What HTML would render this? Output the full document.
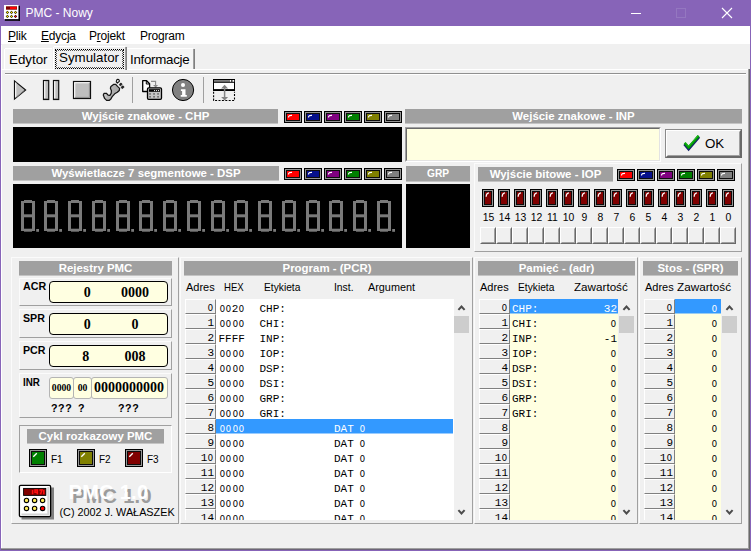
<!DOCTYPE html>
<html><head><meta charset="utf-8"><title>PMC - Nowy</title><style>
*{box-sizing:border-box;margin:0;padding:0}
html,body{width:751px;height:551px;overflow:hidden;background:#f0f0f0;font-family:"Liberation Sans",sans-serif;}
body{position:relative}
.abs,.abs *{position:absolute}
div,span,svg{position:absolute}
.t{white-space:nowrap;line-height:1}
.hdr{box-shadow:0 1px 0 #c4c4c4;background:#a0a0a0;color:#fff;font-weight:bold;font-size:11.45px;text-align:center;white-space:nowrap;overflow:hidden}
.hdr span{position:static}
.lbl{font-size:11px;color:#000;white-space:nowrap;line-height:12px;transform-origin:0 0}
.mono{font-family:"Liberation Mono",monospace;font-size:11px;white-space:nowrap;line-height:15px;color:#000;margin-top:2px}
.cell{background:#f0f0f0;border-top:1px solid #fff;border-left:1px solid #fff;border-bottom:1px solid #808080;border-right:1px solid #808080;font-family:"Liberation Mono",monospace;font-size:11px;text-align:right;line-height:16px;padding-right:1px;color:#000;overflow:hidden}
.frame{border:1px solid;border-color:#a0a0a0 #fff #fff #a0a0a0;}
.frame2{border:1px solid;border-color:#fbfbfb #a0a0a0 #a0a0a0 #fbfbfb;}
.ybox{background:#ffffe1;border:1px solid #000;border-radius:4px}
.gbox{background:#ffffe1;border:1px solid #b4b4b4;border-radius:3px}
.tb{font-family:"Liberation Serif",serif;font-weight:bold;color:#000;white-space:nowrap;line-height:1}
.bold{font-weight:bold}
i{display:inline-block;transform:scaleX(.8);font-style:normal}
</style></head><body>
<div style="left:0;top:0;width:751px;height:26px;background:#8764b8"></div>
<div style="left:0;top:26px;width:1px;height:525px;background:#8764b8"></div>
<div style="left:1px;top:45px;width:1px;height:503px;background:#fff"></div>
<div style="left:750px;top:26px;width:1px;height:525px;background:#8764b8"></div>
<div style="left:748px;top:69px;width:1px;height:480px;background:#a0a0a0"></div>
<div style="left:749px;top:69px;width:1px;height:481px;background:#696969"></div>
<div style="left:1px;top:548px;width:748px;height:1px;background:#a0a0a0"></div>
<div style="left:1px;top:549px;width:749px;height:1px;background:#6c6478"></div>
<div style="left:0;top:550px;width:751px;height:1px;background:#8764b8"></div>
<svg style="left:4px;top:5px" width="17" height="17" viewBox="0 0 17 17">
<rect x="0" y="0" width="14.6" height="14.2" fill="#fff"/>
<rect x="14.6" y="0.8" width="1.4" height="15" fill="#000"/><rect x="0.8" y="14.2" width="15.2" height="1.6" fill="#000"/>
<rect x="2" y="1.3" width="11" height="3.4" fill="#800000"/>
<rect x="6" y="2" width="6.6" height="2" fill="#f00"/>
<path d="M3.4 5.7 L5.1 7.4 L3.4 9.1 L1.7 7.4Z" fill="#000"/><rect x="2.65" y="6.65" width="1.5" height="1.5" fill="#ffe400"/><path d="M7.5 5.7 L9.2 7.4 L7.5 9.1 L5.8 7.4Z" fill="#000"/><rect x="6.75" y="6.65" width="1.5" height="1.5" fill="#ffe400"/><path d="M11.5 5.7 L13.2 7.4 L11.5 9.1 L9.8 7.4Z" fill="#000"/><rect x="10.75" y="6.65" width="1.5" height="1.5" fill="#ffe400"/><path d="M3.4 9.700000000000001 L5.1 11.4 L3.4 13.1 L1.7 11.4Z" fill="#000"/><rect x="2.65" y="10.65" width="1.5" height="1.5" fill="#ffe400"/><path d="M7.5 9.700000000000001 L9.2 11.4 L7.5 13.1 L5.8 11.4Z" fill="#000"/><rect x="6.75" y="10.65" width="1.5" height="1.5" fill="#ffe400"/><path d="M11.5 9.700000000000001 L13.2 11.4 L11.5 13.1 L9.8 11.4Z" fill="#000"/><rect x="10.75" y="10.65" width="1.5" height="1.5" fill="#ff0000"/>
</svg>
<div class="t" style="left:25.5px;top:7px;font-size:12px;color:#fff">PMC - Nowy</div>
<svg style="left:600px;top:0" width="151" height="26" viewBox="0 0 151 26">
<rect x="31" y="13" width="10" height="1" fill="#fff"/>
<rect x="76.5" y="8.5" width="9" height="9" fill="none" stroke="#a18ac8" stroke-width="1" stroke-dasharray="1 1"/>
<path d="M122 8 L132 18 M132 8 L122 18" stroke="#fff" stroke-width="1.1" fill="none"/>
</svg>
<div style="left:1px;top:26px;width:749px;height:18px;background:#fff"></div>
<div class="t" style="left:8px;top:30px;font-size:12px;color:#000;letter-spacing:-0.2px"><u>P</u>lik</div>
<div class="t" style="left:41px;top:30px;font-size:12px;color:#000;letter-spacing:-0.2px"><u>E</u>dycja</div>
<div class="t" style="left:89px;top:30px;font-size:12px;color:#000;letter-spacing:-0.2px">P<u>r</u>ojekt</div>
<div class="t" style="left:140px;top:30px;font-size:12px;color:#000;letter-spacing:-0.2px">Program</div>
<div style="left:5px;top:49px;width:47px;height:20px;background:#f5f5f5"></div>
<div style="left:127px;top:49px;width:66px;height:20px;background:#f5f5f5"></div>
<div class="t" style="left:9px;top:53px;font-size:13.33px">Edytor</div>
<div class="t" style="left:59px;top:51px;font-size:13.33px">Symulator</div>
<div class="t" style="left:130px;top:53px;font-size:13.33px;letter-spacing:-0.28px">Informacje</div>
<div style="left:1px;top:69px;width:747px;height:1px;background:#fff"></div>
<div style="left:54px;top:69px;width:71px;height:1px;background:#f0f0f0"></div>
<div style="left:5px;top:48px;width:47px;height:1px;background:#fff"></div>
<div style="left:4px;top:49px;width:1px;height:20px;background:#fff"></div>
<div style="left:53px;top:47px;width:1px;height:22px;background:#fff"></div>
<div style="left:54px;top:46px;width:71px;height:1px;background:#fff"></div>
<div style="left:125px;top:47px;width:1px;height:23px;background:#a0a0a0"></div>
<div style="left:126px;top:47px;width:1px;height:23px;background:#808080"></div>
<div style="left:55px;top:49px;width:69px;height:20px;border:1px dotted #000"></div>
<div style="left:56px;top:50px;width:67px;height:18px;border:1px dotted #555"></div>
<div style="left:127px;top:48px;width:66px;height:1px;background:#fff"></div>
<div style="left:193px;top:49px;width:1px;height:20px;background:#a0a0a0"></div>
<div style="left:194px;top:49px;width:1px;height:20px;background:#808080"></div>
<div style="left:5px;top:73px;width:741px;height:1px;background:#909090"></div>
<div style="left:5px;top:74px;width:741px;height:1px;background:#fff"></div>
<svg style="left:0;top:74px" width="250" height="32" viewBox="0 74 250 32">
<path d="M14.5 80.9 L14.5 99.1 L25.6 90 Z" fill="#bebebe" stroke="#101010" stroke-width="1.2" stroke-linejoin="miter"/>
<path d="M15.7 82.6 V97.3" stroke="#fff" stroke-width="1.1"/>
<path d="M16.5 97 L24 90.6" stroke="#8c8c8c" stroke-width="0.9"/>
<rect x="43.5" y="80.5" width="5.2" height="19" fill="#bebebe" stroke="#101010" stroke-width="1.2"/>
<rect x="44.2" y="81.2" width="1.1" height="17.6" fill="#fff"/><rect x="44.2" y="98" width="3.9" height="0.9" fill="#8c8c8c"/>
<rect x="53.5" y="80.5" width="5.2" height="19" fill="#bebebe" stroke="#101010" stroke-width="1.2"/>
<rect x="54.2" y="81.2" width="1.1" height="17.6" fill="#fff"/><rect x="54.2" y="98" width="3.9" height="0.9" fill="#8c8c8c"/>
<rect x="73.5" y="81.5" width="17" height="17" fill="#bebebe" stroke="#101010" stroke-width="1.2"/>
<path d="M74.7 97.5 V82.7 H89.5" stroke="#fff" stroke-width="1.1" fill="none"/>
<path d="M75 97.4 H89.4 V83" stroke="#8c8c8c" stroke-width="1" fill="none"/>
<!-- foot -->
<defs><linearGradient id="fg" x1="0" y1="0" x2="1" y2="0.3"><stop offset="0" stop-color="#e6e6e6"/><stop offset="0.45" stop-color="#b4b4b4"/><stop offset="1" stop-color="#a6a6a6"/></linearGradient></defs>
<path d="M113.5 84.4 L115.75 84.4 L117.5 86.4 L119.6 88.4 L119.3 90.5 L117.3 92.3 L114.7 93.8 L112.4 96.3 L110.9 98.9 L109.1 100.4 L106.6 100.4 L104.6 98.4 L103.3 95.1 L104.1 93.3 L106.35 93.3 L108.1 95.1 L109.9 95.3 L111.2 93.3 L111.4 90.7 L110.4 88.2 L110.9 86.4Z" fill="url(#fg)" stroke="#141414" stroke-width="1.25" stroke-linejoin="round"/>
<path d="M117.8 79.2 C119 79.4 119.6 80.6 119.3 81.4 L117.3 83.2 C116.4 82.4 116.2 80.6 116.6 79.9 Z" fill="#e0e0e0" stroke="#141414" stroke-width="1.1" stroke-linejoin="round"/>
<ellipse cx="120.7" cy="84.4" rx="1.35" ry="1.05" transform="rotate(-40 120.7 84.4)" fill="#282828" stroke="#101010" stroke-width="0.7"/>
<ellipse cx="122.6" cy="87.2" rx="1.4" ry="1.1" transform="rotate(-40 122.6 87.2)" fill="#282828" stroke="#101010" stroke-width="0.7"/>
<rect x="132" y="77" width="1" height="26" fill="#a0a0a0"/>
<!-- paste calc -->
<path d="M142.7 80.7 h3.9 l3 3 v7.8 h-6.9 z" fill="#fff" stroke="#000" stroke-width="1.3" stroke-linejoin="round"/>
<path d="M146.3 81 v3 h3" fill="none" stroke="#000" stroke-width="1"/>
<path d="M151 81.4 h4.6 v5.8" fill="none" stroke="#8c8c8c" stroke-width="1.1"/>
<path d="M153 85 h5.2 l-2.6 2.6z" fill="#8c8c8c"/>
<rect x="147.5" y="87.8" width="14" height="11.5" rx="1.2" fill="#c4c4c4" stroke="#000" stroke-width="1.3"/>
<rect x="149" y="89.2" width="11" height="2.6" fill="#000"/>
<g fill="#d8d8d8"><rect x="154" y="90" width="1.1" height="1.1"/><rect x="156" y="90" width="1.1" height="1.1"/><rect x="158" y="90" width="1.1" height="1.1"/></g>
<g fill="#6c6c6c"><rect x="149.2" y="93.1" width="1.7" height="1.6"/><rect x="153.2" y="93.1" width="1.7" height="1.6"/><rect x="157.2" y="93.1" width="1.7" height="1.6"/>
<rect x="149.2" y="96" width="1.7" height="1.6"/><rect x="153.2" y="96" width="1.7" height="1.6"/><rect x="157.2" y="96" width="1.7" height="1.6"/></g>
<!-- info -->
<circle cx="183.05" cy="90" r="10.6" fill="#808080" stroke="#000" stroke-width="1"/>
<circle cx="183" cy="85" r="2.05" fill="#fff"/>
<path d="M180.9 89.3 h4.6 v5.7 h1.3 v1.7 h-6.1 v-1.7 h1.4 v-4 h-1.2z" fill="#fff"/>
<rect x="203" y="77" width="1" height="26" fill="#a0a0a0"/>
<!-- window icon -->
<rect x="213.5" y="79.5" width="21" height="11" fill="#fff" stroke="#000"/>
<rect x="213" y="79" width="22" height="3.8" fill="#000"/>
<rect x="214" y="80" width="15" height="1.8" fill="#808080"/>
<rect x="229.5" y="80" width="1.8" height="1.8" fill="#fff"/><rect x="232.4" y="80" width="1.8" height="1.8" fill="#fff"/>
<rect x="213" y="89.1" width="22" height="1.8" fill="#000"/>
<path d="M213.6 91.8 v8.7 h20.9 v-8.7" fill="none" stroke="#000" stroke-width="1.1" stroke-dasharray="2 1.4"/>
<path d="M224.6 87 v11" stroke="#848484" stroke-width="1.5" fill="none"/>
<path d="M221.1 88.6 l3.5 -3.9 l3.5 3.9z M221.1 97 l3.5 3.6 l3.5 -3.6z" fill="#848484"/>
</svg>
<div class="hdr" style="left:13px;top:109px;width:265px;height:14px;line-height:14px"><span>Wyjście znakowe - CHP</span></div>
<svg style="left:284px;top:111px" width="18" height="12" viewBox="0 0 18 12"><rect x="0" y="0" width="18" height="12" fill="#000"/><rect x="1" y="1" width="16" height="10" fill="#969696"/><rect x="2" y="2" width="14" height="8" fill="#0c0c0c"/><rect x="3" y="3" width="12" height="6" fill="#ff0000"/><path d="M4.5 6.5 C4.5 4.8 5.5 4.2 8 4.3" stroke="#fff" stroke-width="1.2" fill="none"/></svg>
<svg style="left:304px;top:111px" width="18" height="12" viewBox="0 0 18 12"><rect x="0" y="0" width="18" height="12" fill="#000"/><rect x="1" y="1" width="16" height="10" fill="#969696"/><rect x="2" y="2" width="14" height="8" fill="#0c0c0c"/><rect x="3" y="3" width="12" height="6" fill="#06108c"/><path d="M4.5 6.5 C4.5 4.8 5.5 4.2 8 4.3" stroke="#fff" stroke-width="1.2" fill="none"/></svg>
<svg style="left:324px;top:111px" width="18" height="12" viewBox="0 0 18 12"><rect x="0" y="0" width="18" height="12" fill="#000"/><rect x="1" y="1" width="16" height="10" fill="#969696"/><rect x="2" y="2" width="14" height="8" fill="#0c0c0c"/><rect x="3" y="3" width="12" height="6" fill="#800080"/><path d="M4.5 6.5 C4.5 4.8 5.5 4.2 8 4.3" stroke="#fff" stroke-width="1.2" fill="none"/></svg>
<svg style="left:344px;top:111px" width="18" height="12" viewBox="0 0 18 12"><rect x="0" y="0" width="18" height="12" fill="#000"/><rect x="1" y="1" width="16" height="10" fill="#969696"/><rect x="2" y="2" width="14" height="8" fill="#0c0c0c"/><rect x="3" y="3" width="12" height="6" fill="#008000"/><path d="M4.5 6.5 C4.5 4.8 5.5 4.2 8 4.3" stroke="#fff" stroke-width="1.2" fill="none"/></svg>
<svg style="left:364px;top:111px" width="18" height="12" viewBox="0 0 18 12"><rect x="0" y="0" width="18" height="12" fill="#000"/><rect x="1" y="1" width="16" height="10" fill="#969696"/><rect x="2" y="2" width="14" height="8" fill="#0c0c0c"/><rect x="3" y="3" width="12" height="6" fill="#808000"/><path d="M4.5 6.5 C4.5 4.8 5.5 4.2 8 4.3" stroke="#fff" stroke-width="1.2" fill="none"/></svg>
<svg style="left:384px;top:111px" width="18" height="12" viewBox="0 0 18 12"><rect x="0" y="0" width="18" height="12" fill="#000"/><rect x="1" y="1" width="16" height="10" fill="#969696"/><rect x="2" y="2" width="14" height="8" fill="#0c0c0c"/><rect x="3" y="3" width="12" height="6" fill="#808080"/><path d="M4.5 6.5 C4.5 4.8 5.5 4.2 8 4.3" stroke="#fff" stroke-width="1.2" fill="none"/></svg>
<div style="left:13px;top:127px;width:389px;height:35px;background:#000"></div>
<div class="hdr" style="left:405px;top:109px;width:337px;height:14px;line-height:14px"><span>Wejście znakowe - INP</span></div>
<div style="left:405px;top:127px;width:256px;height:35px;background:#ffffe1;border:1px solid;border-color:#a0a0a0 #fff #fff #a0a0a0"></div>
<div style="left:406px;top:128px;width:254px;height:33px;border:1px solid;border-color:#696969 #e3e3e3 #e3e3e3 #696969"></div>
<div style="left:665px;top:129px;width:77px;height:29px;background:#f0f0f0;border:1px solid;border-color:#8a8a8a #696969 #696969 #8a8a8a"></div>
<div style="left:666px;top:130px;width:75px;height:27px;border:1px solid;border-color:#fff #696969 #696969 #fff"></div>
<div style="left:667px;top:131px;width:73px;height:25px;border:1px solid;border-color:#f0f0f0 #a0a0a0 #a0a0a0 #f0f0f0"></div>
<svg style="left:682px;top:133px" width="20" height="20" viewBox="0 0 20 20">
<path d="M2.6 10.9 L6.6 15.6 L16.9 3.6" stroke="#14226a" stroke-width="3.3" fill="none" stroke-linejoin="miter"/>
<path d="M2.7 9.9 L6.6 14.3 L16.6 2.9" stroke="#00a000" stroke-width="2.5" fill="none" stroke-linejoin="miter"/>
<path d="M3.2 9.3 L6.6 13.2 L16.2 2.4" stroke="#30c030" stroke-width="0.9" fill="none" stroke-linejoin="miter"/>
</svg>
<div class="t" style="left:705px;top:137px;font-size:13.33px">OK</div>
<div class="hdr" style="left:13px;top:166px;width:266px;height:14px;line-height:14px"><span>Wyświetlacze 7 segmentowe - DSP</span></div>
<svg style="left:284px;top:168px" width="18" height="12" viewBox="0 0 18 12"><rect x="0" y="0" width="18" height="12" fill="#000"/><rect x="1" y="1" width="16" height="10" fill="#969696"/><rect x="2" y="2" width="14" height="8" fill="#0c0c0c"/><rect x="3" y="3" width="12" height="6" fill="#ff0000"/><path d="M4.5 6.5 C4.5 4.8 5.5 4.2 8 4.3" stroke="#fff" stroke-width="1.2" fill="none"/></svg>
<svg style="left:304px;top:168px" width="18" height="12" viewBox="0 0 18 12"><rect x="0" y="0" width="18" height="12" fill="#000"/><rect x="1" y="1" width="16" height="10" fill="#969696"/><rect x="2" y="2" width="14" height="8" fill="#0c0c0c"/><rect x="3" y="3" width="12" height="6" fill="#06108c"/><path d="M4.5 6.5 C4.5 4.8 5.5 4.2 8 4.3" stroke="#fff" stroke-width="1.2" fill="none"/></svg>
<svg style="left:324px;top:168px" width="18" height="12" viewBox="0 0 18 12"><rect x="0" y="0" width="18" height="12" fill="#000"/><rect x="1" y="1" width="16" height="10" fill="#969696"/><rect x="2" y="2" width="14" height="8" fill="#0c0c0c"/><rect x="3" y="3" width="12" height="6" fill="#800080"/><path d="M4.5 6.5 C4.5 4.8 5.5 4.2 8 4.3" stroke="#fff" stroke-width="1.2" fill="none"/></svg>
<svg style="left:344px;top:168px" width="18" height="12" viewBox="0 0 18 12"><rect x="0" y="0" width="18" height="12" fill="#000"/><rect x="1" y="1" width="16" height="10" fill="#969696"/><rect x="2" y="2" width="14" height="8" fill="#0c0c0c"/><rect x="3" y="3" width="12" height="6" fill="#008000"/><path d="M4.5 6.5 C4.5 4.8 5.5 4.2 8 4.3" stroke="#fff" stroke-width="1.2" fill="none"/></svg>
<svg style="left:364px;top:168px" width="18" height="12" viewBox="0 0 18 12"><rect x="0" y="0" width="18" height="12" fill="#000"/><rect x="1" y="1" width="16" height="10" fill="#969696"/><rect x="2" y="2" width="14" height="8" fill="#0c0c0c"/><rect x="3" y="3" width="12" height="6" fill="#808000"/><path d="M4.5 6.5 C4.5 4.8 5.5 4.2 8 4.3" stroke="#fff" stroke-width="1.2" fill="none"/></svg>
<svg style="left:384px;top:168px" width="18" height="12" viewBox="0 0 18 12"><rect x="0" y="0" width="18" height="12" fill="#000"/><rect x="1" y="1" width="16" height="10" fill="#969696"/><rect x="2" y="2" width="14" height="8" fill="#0c0c0c"/><rect x="3" y="3" width="12" height="6" fill="#808080"/><path d="M4.5 6.5 C4.5 4.8 5.5 4.2 8 4.3" stroke="#fff" stroke-width="1.2" fill="none"/></svg>
<div style="left:13px;top:184px;width:389px;height:64px;background:#000"></div>
<svg style="left:0;top:0" width="410" height="250" viewBox="0 0 410 250"><g fill="#7a7a7a"><g transform="translate(21.00,200)"><rect x="0" y="1" width="3" height="30" /><rect x="11" y="1" width="3" height="30"/><rect x="3" y="0" width="8" height="3"/><rect x="3" y="14.3" width="8" height="3"/><rect x="3" y="28.7" width="8" height="3"/><rect x="15.2" y="29" width="2.8" height="2.8"/></g><g transform="translate(44.00,200)"><rect x="0" y="1" width="3" height="30" /><rect x="11" y="1" width="3" height="30"/><rect x="3" y="0" width="8" height="3"/><rect x="3" y="14.3" width="8" height="3"/><rect x="3" y="28.7" width="8" height="3"/><rect x="15.2" y="29" width="2.8" height="2.8"/></g><g transform="translate(68.00,200)"><rect x="0" y="1" width="3" height="30" /><rect x="11" y="1" width="3" height="30"/><rect x="3" y="0" width="8" height="3"/><rect x="3" y="14.3" width="8" height="3"/><rect x="3" y="28.7" width="8" height="3"/><rect x="15.2" y="29" width="2.8" height="2.8"/></g><g transform="translate(92.00,200)"><rect x="0" y="1" width="3" height="30" /><rect x="11" y="1" width="3" height="30"/><rect x="3" y="0" width="8" height="3"/><rect x="3" y="14.3" width="8" height="3"/><rect x="3" y="28.7" width="8" height="3"/><rect x="15.2" y="29" width="2.8" height="2.8"/></g><g transform="translate(116.00,200)"><rect x="0" y="1" width="3" height="30" /><rect x="11" y="1" width="3" height="30"/><rect x="3" y="0" width="8" height="3"/><rect x="3" y="14.3" width="8" height="3"/><rect x="3" y="28.7" width="8" height="3"/><rect x="15.2" y="29" width="2.8" height="2.8"/></g><g transform="translate(139.00,200)"><rect x="0" y="1" width="3" height="30" /><rect x="11" y="1" width="3" height="30"/><rect x="3" y="0" width="8" height="3"/><rect x="3" y="14.3" width="8" height="3"/><rect x="3" y="28.7" width="8" height="3"/><rect x="15.2" y="29" width="2.8" height="2.8"/></g><g transform="translate(163.00,200)"><rect x="0" y="1" width="3" height="30" /><rect x="11" y="1" width="3" height="30"/><rect x="3" y="0" width="8" height="3"/><rect x="3" y="14.3" width="8" height="3"/><rect x="3" y="28.7" width="8" height="3"/><rect x="15.2" y="29" width="2.8" height="2.8"/></g><g transform="translate(187.00,200)"><rect x="0" y="1" width="3" height="30" /><rect x="11" y="1" width="3" height="30"/><rect x="3" y="0" width="8" height="3"/><rect x="3" y="14.3" width="8" height="3"/><rect x="3" y="28.7" width="8" height="3"/><rect x="15.2" y="29" width="2.8" height="2.8"/></g><g transform="translate(211.00,200)"><rect x="0" y="1" width="3" height="30" /><rect x="11" y="1" width="3" height="30"/><rect x="3" y="0" width="8" height="3"/><rect x="3" y="14.3" width="8" height="3"/><rect x="3" y="28.7" width="8" height="3"/><rect x="15.2" y="29" width="2.8" height="2.8"/></g><g transform="translate(234.00,200)"><rect x="0" y="1" width="3" height="30" /><rect x="11" y="1" width="3" height="30"/><rect x="3" y="0" width="8" height="3"/><rect x="3" y="14.3" width="8" height="3"/><rect x="3" y="28.7" width="8" height="3"/><rect x="15.2" y="29" width="2.8" height="2.8"/></g><g transform="translate(258.00,200)"><rect x="0" y="1" width="3" height="30" /><rect x="11" y="1" width="3" height="30"/><rect x="3" y="0" width="8" height="3"/><rect x="3" y="14.3" width="8" height="3"/><rect x="3" y="28.7" width="8" height="3"/><rect x="15.2" y="29" width="2.8" height="2.8"/></g><g transform="translate(282.00,200)"><rect x="0" y="1" width="3" height="30" /><rect x="11" y="1" width="3" height="30"/><rect x="3" y="0" width="8" height="3"/><rect x="3" y="14.3" width="8" height="3"/><rect x="3" y="28.7" width="8" height="3"/><rect x="15.2" y="29" width="2.8" height="2.8"/></g><g transform="translate(306.00,200)"><rect x="0" y="1" width="3" height="30" /><rect x="11" y="1" width="3" height="30"/><rect x="3" y="0" width="8" height="3"/><rect x="3" y="14.3" width="8" height="3"/><rect x="3" y="28.7" width="8" height="3"/><rect x="15.2" y="29" width="2.8" height="2.8"/></g><g transform="translate(329.00,200)"><rect x="0" y="1" width="3" height="30" /><rect x="11" y="1" width="3" height="30"/><rect x="3" y="0" width="8" height="3"/><rect x="3" y="14.3" width="8" height="3"/><rect x="3" y="28.7" width="8" height="3"/><rect x="15.2" y="29" width="2.8" height="2.8"/></g><g transform="translate(353.00,200)"><rect x="0" y="1" width="3" height="30" /><rect x="11" y="1" width="3" height="30"/><rect x="3" y="0" width="8" height="3"/><rect x="3" y="14.3" width="8" height="3"/><rect x="3" y="28.7" width="8" height="3"/><rect x="15.2" y="29" width="2.8" height="2.8"/></g><g transform="translate(377.00,200)"><rect x="0" y="1" width="3" height="30" /><rect x="11" y="1" width="3" height="30"/><rect x="3" y="0" width="8" height="3"/><rect x="3" y="14.3" width="8" height="3"/><rect x="3" y="28.7" width="8" height="3"/><rect x="15.2" y="29" width="2.8" height="2.8"/></g></g></svg>
<div class="hdr" style="left:406px;top:166px;width:64px;height:15px;line-height:15px;font-size:10.2px"><span>GRP</span></div>
<div style="left:406px;top:184px;width:64px;height:64px;background:#000"></div>
<div class="frame2" style="left:474px;top:163px;width:268px;height:89px"></div>
<div class="hdr" style="left:478px;top:167px;width:135px;height:14px;line-height:14px"><span>Wyjście bitowe - IOP</span></div>
<svg style="left:617px;top:169px" width="18" height="12" viewBox="0 0 18 12"><rect x="0" y="0" width="18" height="12" fill="#000"/><rect x="1" y="1" width="16" height="10" fill="#969696"/><rect x="2" y="2" width="14" height="8" fill="#0c0c0c"/><rect x="3" y="3" width="12" height="6" fill="#ff0000"/><path d="M4.5 6.5 C4.5 4.8 5.5 4.2 8 4.3" stroke="#fff" stroke-width="1.2" fill="none"/></svg>
<svg style="left:637px;top:169px" width="18" height="12" viewBox="0 0 18 12"><rect x="0" y="0" width="18" height="12" fill="#000"/><rect x="1" y="1" width="16" height="10" fill="#969696"/><rect x="2" y="2" width="14" height="8" fill="#0c0c0c"/><rect x="3" y="3" width="12" height="6" fill="#06108c"/><path d="M4.5 6.5 C4.5 4.8 5.5 4.2 8 4.3" stroke="#fff" stroke-width="1.2" fill="none"/></svg>
<svg style="left:657px;top:169px" width="18" height="12" viewBox="0 0 18 12"><rect x="0" y="0" width="18" height="12" fill="#000"/><rect x="1" y="1" width="16" height="10" fill="#969696"/><rect x="2" y="2" width="14" height="8" fill="#0c0c0c"/><rect x="3" y="3" width="12" height="6" fill="#800080"/><path d="M4.5 6.5 C4.5 4.8 5.5 4.2 8 4.3" stroke="#fff" stroke-width="1.2" fill="none"/></svg>
<svg style="left:677px;top:169px" width="18" height="12" viewBox="0 0 18 12"><rect x="0" y="0" width="18" height="12" fill="#000"/><rect x="1" y="1" width="16" height="10" fill="#969696"/><rect x="2" y="2" width="14" height="8" fill="#0c0c0c"/><rect x="3" y="3" width="12" height="6" fill="#008000"/><path d="M4.5 6.5 C4.5 4.8 5.5 4.2 8 4.3" stroke="#fff" stroke-width="1.2" fill="none"/></svg>
<svg style="left:697px;top:169px" width="18" height="12" viewBox="0 0 18 12"><rect x="0" y="0" width="18" height="12" fill="#000"/><rect x="1" y="1" width="16" height="10" fill="#969696"/><rect x="2" y="2" width="14" height="8" fill="#0c0c0c"/><rect x="3" y="3" width="12" height="6" fill="#808000"/><path d="M4.5 6.5 C4.5 4.8 5.5 4.2 8 4.3" stroke="#fff" stroke-width="1.2" fill="none"/></svg>
<svg style="left:717px;top:169px" width="18" height="12" viewBox="0 0 18 12"><rect x="0" y="0" width="18" height="12" fill="#000"/><rect x="1" y="1" width="16" height="10" fill="#969696"/><rect x="2" y="2" width="14" height="8" fill="#0c0c0c"/><rect x="3" y="3" width="12" height="6" fill="#808080"/><path d="M4.5 6.5 C4.5 4.8 5.5 4.2 8 4.3" stroke="#fff" stroke-width="1.2" fill="none"/></svg>
<svg style="left:482px;top:189px" width="12" height="18" viewBox="0 0 12 18"><rect x="0" y="0" width="12" height="18" fill="#000"/><rect x="1" y="1" width="10" height="16" fill="#969696"/><rect x="2" y="2" width="8" height="14" fill="#0c0c0c"/><rect x="3" y="3" width="6" height="12" fill="#800000"/><path d="M4.2 7.8 C4.2 5.4 4.8 4.2 7 3.9" stroke="#fff" stroke-width="1.2" fill="none"/></svg>
<div class="lbl" style="left:476.5px;top:212px;width:24px;text-align:center;font-size:10.4px">15</div>
<div style="left:480px;top:227px;width:16px;height:17px;background:#f0f0f0;border:1px solid;border-color:#fff #696969 #696969 #fff"></div>
<div style="left:481px;top:228px;width:14px;height:15px;border:1px solid;border-color:#f0f0f0 #a0a0a0 #a0a0a0 #f0f0f0"></div>
<svg style="left:498px;top:189px" width="12" height="18" viewBox="0 0 12 18"><rect x="0" y="0" width="12" height="18" fill="#000"/><rect x="1" y="1" width="10" height="16" fill="#969696"/><rect x="2" y="2" width="8" height="14" fill="#0c0c0c"/><rect x="3" y="3" width="6" height="12" fill="#800000"/><path d="M4.2 7.8 C4.2 5.4 4.8 4.2 7 3.9" stroke="#fff" stroke-width="1.2" fill="none"/></svg>
<div class="lbl" style="left:492.5px;top:212px;width:24px;text-align:center;font-size:10.4px">14</div>
<div style="left:496px;top:227px;width:16px;height:17px;background:#f0f0f0;border:1px solid;border-color:#fff #696969 #696969 #fff"></div>
<div style="left:497px;top:228px;width:14px;height:15px;border:1px solid;border-color:#f0f0f0 #a0a0a0 #a0a0a0 #f0f0f0"></div>
<svg style="left:514px;top:189px" width="12" height="18" viewBox="0 0 12 18"><rect x="0" y="0" width="12" height="18" fill="#000"/><rect x="1" y="1" width="10" height="16" fill="#969696"/><rect x="2" y="2" width="8" height="14" fill="#0c0c0c"/><rect x="3" y="3" width="6" height="12" fill="#800000"/><path d="M4.2 7.8 C4.2 5.4 4.8 4.2 7 3.9" stroke="#fff" stroke-width="1.2" fill="none"/></svg>
<div class="lbl" style="left:508.5px;top:212px;width:24px;text-align:center;font-size:10.4px">13</div>
<div style="left:512px;top:227px;width:16px;height:17px;background:#f0f0f0;border:1px solid;border-color:#fff #696969 #696969 #fff"></div>
<div style="left:513px;top:228px;width:14px;height:15px;border:1px solid;border-color:#f0f0f0 #a0a0a0 #a0a0a0 #f0f0f0"></div>
<svg style="left:530px;top:189px" width="12" height="18" viewBox="0 0 12 18"><rect x="0" y="0" width="12" height="18" fill="#000"/><rect x="1" y="1" width="10" height="16" fill="#969696"/><rect x="2" y="2" width="8" height="14" fill="#0c0c0c"/><rect x="3" y="3" width="6" height="12" fill="#800000"/><path d="M4.2 7.8 C4.2 5.4 4.8 4.2 7 3.9" stroke="#fff" stroke-width="1.2" fill="none"/></svg>
<div class="lbl" style="left:524.5px;top:212px;width:24px;text-align:center;font-size:10.4px">12</div>
<div style="left:528px;top:227px;width:16px;height:17px;background:#f0f0f0;border:1px solid;border-color:#fff #696969 #696969 #fff"></div>
<div style="left:529px;top:228px;width:14px;height:15px;border:1px solid;border-color:#f0f0f0 #a0a0a0 #a0a0a0 #f0f0f0"></div>
<svg style="left:546px;top:189px" width="12" height="18" viewBox="0 0 12 18"><rect x="0" y="0" width="12" height="18" fill="#000"/><rect x="1" y="1" width="10" height="16" fill="#969696"/><rect x="2" y="2" width="8" height="14" fill="#0c0c0c"/><rect x="3" y="3" width="6" height="12" fill="#800000"/><path d="M4.2 7.8 C4.2 5.4 4.8 4.2 7 3.9" stroke="#fff" stroke-width="1.2" fill="none"/></svg>
<div class="lbl" style="left:540.5px;top:212px;width:24px;text-align:center;font-size:10.4px">11</div>
<div style="left:544px;top:227px;width:16px;height:17px;background:#f0f0f0;border:1px solid;border-color:#fff #696969 #696969 #fff"></div>
<div style="left:545px;top:228px;width:14px;height:15px;border:1px solid;border-color:#f0f0f0 #a0a0a0 #a0a0a0 #f0f0f0"></div>
<svg style="left:562px;top:189px" width="12" height="18" viewBox="0 0 12 18"><rect x="0" y="0" width="12" height="18" fill="#000"/><rect x="1" y="1" width="10" height="16" fill="#969696"/><rect x="2" y="2" width="8" height="14" fill="#0c0c0c"/><rect x="3" y="3" width="6" height="12" fill="#800000"/><path d="M4.2 7.8 C4.2 5.4 4.8 4.2 7 3.9" stroke="#fff" stroke-width="1.2" fill="none"/></svg>
<div class="lbl" style="left:556.5px;top:212px;width:24px;text-align:center;font-size:10.4px">10</div>
<div style="left:560px;top:227px;width:16px;height:17px;background:#f0f0f0;border:1px solid;border-color:#fff #696969 #696969 #fff"></div>
<div style="left:561px;top:228px;width:14px;height:15px;border:1px solid;border-color:#f0f0f0 #a0a0a0 #a0a0a0 #f0f0f0"></div>
<svg style="left:578px;top:189px" width="12" height="18" viewBox="0 0 12 18"><rect x="0" y="0" width="12" height="18" fill="#000"/><rect x="1" y="1" width="10" height="16" fill="#969696"/><rect x="2" y="2" width="8" height="14" fill="#0c0c0c"/><rect x="3" y="3" width="6" height="12" fill="#800000"/><path d="M4.2 7.8 C4.2 5.4 4.8 4.2 7 3.9" stroke="#fff" stroke-width="1.2" fill="none"/></svg>
<div class="lbl" style="left:572.5px;top:212px;width:24px;text-align:center;font-size:10.4px">9</div>
<div style="left:576px;top:227px;width:16px;height:17px;background:#f0f0f0;border:1px solid;border-color:#fff #696969 #696969 #fff"></div>
<div style="left:577px;top:228px;width:14px;height:15px;border:1px solid;border-color:#f0f0f0 #a0a0a0 #a0a0a0 #f0f0f0"></div>
<svg style="left:594px;top:189px" width="12" height="18" viewBox="0 0 12 18"><rect x="0" y="0" width="12" height="18" fill="#000"/><rect x="1" y="1" width="10" height="16" fill="#969696"/><rect x="2" y="2" width="8" height="14" fill="#0c0c0c"/><rect x="3" y="3" width="6" height="12" fill="#800000"/><path d="M4.2 7.8 C4.2 5.4 4.8 4.2 7 3.9" stroke="#fff" stroke-width="1.2" fill="none"/></svg>
<div class="lbl" style="left:588.5px;top:212px;width:24px;text-align:center;font-size:10.4px">8</div>
<div style="left:592px;top:227px;width:16px;height:17px;background:#f0f0f0;border:1px solid;border-color:#fff #696969 #696969 #fff"></div>
<div style="left:593px;top:228px;width:14px;height:15px;border:1px solid;border-color:#f0f0f0 #a0a0a0 #a0a0a0 #f0f0f0"></div>
<svg style="left:610px;top:189px" width="12" height="18" viewBox="0 0 12 18"><rect x="0" y="0" width="12" height="18" fill="#000"/><rect x="1" y="1" width="10" height="16" fill="#969696"/><rect x="2" y="2" width="8" height="14" fill="#0c0c0c"/><rect x="3" y="3" width="6" height="12" fill="#800000"/><path d="M4.2 7.8 C4.2 5.4 4.8 4.2 7 3.9" stroke="#fff" stroke-width="1.2" fill="none"/></svg>
<div class="lbl" style="left:604.5px;top:212px;width:24px;text-align:center;font-size:10.4px">7</div>
<div style="left:608px;top:227px;width:16px;height:17px;background:#f0f0f0;border:1px solid;border-color:#fff #696969 #696969 #fff"></div>
<div style="left:609px;top:228px;width:14px;height:15px;border:1px solid;border-color:#f0f0f0 #a0a0a0 #a0a0a0 #f0f0f0"></div>
<svg style="left:626px;top:189px" width="12" height="18" viewBox="0 0 12 18"><rect x="0" y="0" width="12" height="18" fill="#000"/><rect x="1" y="1" width="10" height="16" fill="#969696"/><rect x="2" y="2" width="8" height="14" fill="#0c0c0c"/><rect x="3" y="3" width="6" height="12" fill="#800000"/><path d="M4.2 7.8 C4.2 5.4 4.8 4.2 7 3.9" stroke="#fff" stroke-width="1.2" fill="none"/></svg>
<div class="lbl" style="left:620.5px;top:212px;width:24px;text-align:center;font-size:10.4px">6</div>
<div style="left:624px;top:227px;width:16px;height:17px;background:#f0f0f0;border:1px solid;border-color:#fff #696969 #696969 #fff"></div>
<div style="left:625px;top:228px;width:14px;height:15px;border:1px solid;border-color:#f0f0f0 #a0a0a0 #a0a0a0 #f0f0f0"></div>
<svg style="left:642px;top:189px" width="12" height="18" viewBox="0 0 12 18"><rect x="0" y="0" width="12" height="18" fill="#000"/><rect x="1" y="1" width="10" height="16" fill="#969696"/><rect x="2" y="2" width="8" height="14" fill="#0c0c0c"/><rect x="3" y="3" width="6" height="12" fill="#800000"/><path d="M4.2 7.8 C4.2 5.4 4.8 4.2 7 3.9" stroke="#fff" stroke-width="1.2" fill="none"/></svg>
<div class="lbl" style="left:636.5px;top:212px;width:24px;text-align:center;font-size:10.4px">5</div>
<div style="left:640px;top:227px;width:16px;height:17px;background:#f0f0f0;border:1px solid;border-color:#fff #696969 #696969 #fff"></div>
<div style="left:641px;top:228px;width:14px;height:15px;border:1px solid;border-color:#f0f0f0 #a0a0a0 #a0a0a0 #f0f0f0"></div>
<svg style="left:658px;top:189px" width="12" height="18" viewBox="0 0 12 18"><rect x="0" y="0" width="12" height="18" fill="#000"/><rect x="1" y="1" width="10" height="16" fill="#969696"/><rect x="2" y="2" width="8" height="14" fill="#0c0c0c"/><rect x="3" y="3" width="6" height="12" fill="#800000"/><path d="M4.2 7.8 C4.2 5.4 4.8 4.2 7 3.9" stroke="#fff" stroke-width="1.2" fill="none"/></svg>
<div class="lbl" style="left:652.5px;top:212px;width:24px;text-align:center;font-size:10.4px">4</div>
<div style="left:656px;top:227px;width:16px;height:17px;background:#f0f0f0;border:1px solid;border-color:#fff #696969 #696969 #fff"></div>
<div style="left:657px;top:228px;width:14px;height:15px;border:1px solid;border-color:#f0f0f0 #a0a0a0 #a0a0a0 #f0f0f0"></div>
<svg style="left:674px;top:189px" width="12" height="18" viewBox="0 0 12 18"><rect x="0" y="0" width="12" height="18" fill="#000"/><rect x="1" y="1" width="10" height="16" fill="#969696"/><rect x="2" y="2" width="8" height="14" fill="#0c0c0c"/><rect x="3" y="3" width="6" height="12" fill="#800000"/><path d="M4.2 7.8 C4.2 5.4 4.8 4.2 7 3.9" stroke="#fff" stroke-width="1.2" fill="none"/></svg>
<div class="lbl" style="left:668.5px;top:212px;width:24px;text-align:center;font-size:10.4px">3</div>
<div style="left:672px;top:227px;width:16px;height:17px;background:#f0f0f0;border:1px solid;border-color:#fff #696969 #696969 #fff"></div>
<div style="left:673px;top:228px;width:14px;height:15px;border:1px solid;border-color:#f0f0f0 #a0a0a0 #a0a0a0 #f0f0f0"></div>
<svg style="left:690px;top:189px" width="12" height="18" viewBox="0 0 12 18"><rect x="0" y="0" width="12" height="18" fill="#000"/><rect x="1" y="1" width="10" height="16" fill="#969696"/><rect x="2" y="2" width="8" height="14" fill="#0c0c0c"/><rect x="3" y="3" width="6" height="12" fill="#800000"/><path d="M4.2 7.8 C4.2 5.4 4.8 4.2 7 3.9" stroke="#fff" stroke-width="1.2" fill="none"/></svg>
<div class="lbl" style="left:684.5px;top:212px;width:24px;text-align:center;font-size:10.4px">2</div>
<div style="left:688px;top:227px;width:16px;height:17px;background:#f0f0f0;border:1px solid;border-color:#fff #696969 #696969 #fff"></div>
<div style="left:689px;top:228px;width:14px;height:15px;border:1px solid;border-color:#f0f0f0 #a0a0a0 #a0a0a0 #f0f0f0"></div>
<svg style="left:706px;top:189px" width="12" height="18" viewBox="0 0 12 18"><rect x="0" y="0" width="12" height="18" fill="#000"/><rect x="1" y="1" width="10" height="16" fill="#969696"/><rect x="2" y="2" width="8" height="14" fill="#0c0c0c"/><rect x="3" y="3" width="6" height="12" fill="#800000"/><path d="M4.2 7.8 C4.2 5.4 4.8 4.2 7 3.9" stroke="#fff" stroke-width="1.2" fill="none"/></svg>
<div class="lbl" style="left:700.5px;top:212px;width:24px;text-align:center;font-size:10.4px">1</div>
<div style="left:704px;top:227px;width:16px;height:17px;background:#f0f0f0;border:1px solid;border-color:#fff #696969 #696969 #fff"></div>
<div style="left:705px;top:228px;width:14px;height:15px;border:1px solid;border-color:#f0f0f0 #a0a0a0 #a0a0a0 #f0f0f0"></div>
<svg style="left:722px;top:189px" width="12" height="18" viewBox="0 0 12 18"><rect x="0" y="0" width="12" height="18" fill="#000"/><rect x="1" y="1" width="10" height="16" fill="#969696"/><rect x="2" y="2" width="8" height="14" fill="#0c0c0c"/><rect x="3" y="3" width="6" height="12" fill="#800000"/><path d="M4.2 7.8 C4.2 5.4 4.8 4.2 7 3.9" stroke="#fff" stroke-width="1.2" fill="none"/></svg>
<div class="lbl" style="left:716.5px;top:212px;width:24px;text-align:center;font-size:10.4px">0</div>
<div style="left:720px;top:227px;width:16px;height:17px;background:#f0f0f0;border:1px solid;border-color:#fff #696969 #696969 #fff"></div>
<div style="left:721px;top:228px;width:14px;height:15px;border:1px solid;border-color:#f0f0f0 #a0a0a0 #a0a0a0 #f0f0f0"></div>
<div class="frame2" style="left:11px;top:257px;width:168px;height:267px"></div>
<div class="hdr" style="left:19px;top:261px;width:153px;height:14px;line-height:14px"><span>Rejestry PMC</span></div>
<div class="frame2" style="left:19px;top:278px;width:153px;height:28px"></div>
<div class="t bold" style="left:23px;top:281px;font-size:10.67px">ACR</div>
<div class="ybox" style="left:49px;top:281px;width:119px;height:22px"></div>
<div class="tb" style="left:67.3px;top:286px;width:40px;text-align:center;font-size:14px">0</div>
<div class="tb" style="left:105px;top:286px;width:60px;text-align:center;font-size:14px">0000</div>
<div class="frame2" style="left:19px;top:309px;width:153px;height:29px"></div>
<div class="t bold" style="left:23px;top:313px;font-size:10.67px">SPR</div>
<div class="ybox" style="left:49px;top:313px;width:119px;height:22px"></div>
<div class="tb" style="left:67.3px;top:318px;width:40px;text-align:center;font-size:14px">0</div>
<div class="tb" style="left:105px;top:318px;width:60px;text-align:center;font-size:14px">0</div>
<div class="frame2" style="left:19px;top:341px;width:153px;height:29px"></div>
<div class="t bold" style="left:23px;top:345px;font-size:10.67px">PCR</div>
<div class="ybox" style="left:49px;top:345px;width:119px;height:22px"></div>
<div class="tb" style="left:65.7px;top:350px;width:40px;text-align:center;font-size:14px">8</div>
<div class="tb" style="left:105px;top:350px;width:60px;text-align:center;font-size:14px">008</div>
<div class="frame2" style="left:19px;top:373px;width:153px;height:45px"></div>
<div class="t bold" style="left:23px;top:377px;font-size:10.67px;transform:scaleX(0.92);transform-origin:0 0">INR</div>
<div class="gbox" style="left:49px;top:377px;width:25px;height:22px"></div>
<div class="gbox" style="left:73px;top:377px;width:19px;height:22px"></div>
<div class="gbox" style="left:91px;top:377px;width:77px;height:22px"></div>
<div class="tb" style="left:49px;top:383px;width:25px;text-align:center;font-size:9.7px">0000</div>
<div class="tb" style="left:73px;top:383px;width:19px;text-align:center;font-size:9.7px">00</div>
<div class="tb" style="left:91px;top:381px;width:76px;text-align:center;font-size:14px">0000000000</div>
<div class="t bold" style="left:51px;top:403px;font-size:10.67px;letter-spacing:0.6px">???</div>
<div class="t bold" style="left:78px;top:403px;font-size:10.67px">?</div>
<div class="t bold" style="left:118px;top:403px;font-size:10.67px;letter-spacing:0.6px">???</div>
<div class="frame" style="left:19px;top:425px;width:153px;height:48px"></div>
<div class="hdr" style="left:27px;top:429px;width:137px;height:14px;line-height:14px"><span>Cykl rozkazowy PMC</span></div>
<svg style="left:29px;top:449px" width="18" height="18" viewBox="0 0 18 18"><rect x="0" y="0" width="18" height="18" fill="#000"/><rect x="1" y="1" width="16" height="16" fill="#969696"/><rect x="2" y="2" width="14" height="14" fill="#0c0c0c"/><rect x="3" y="3" width="12" height="12" fill="#008000"/><path d="M4.3 7.8 L7.8 4.3" stroke="#fff" stroke-width="1.3" fill="none"/></svg>
<div class="t" style="left:51px;top:455px;font-size:10px">F1</div>
<svg style="left:77px;top:449px" width="18" height="18" viewBox="0 0 18 18"><rect x="0" y="0" width="18" height="18" fill="#000"/><rect x="1" y="1" width="16" height="16" fill="#969696"/><rect x="2" y="2" width="14" height="14" fill="#0c0c0c"/><rect x="3" y="3" width="12" height="12" fill="#808000"/><path d="M4.3 7.8 L7.8 4.3" stroke="#fff" stroke-width="1.3" fill="none"/></svg>
<div class="t" style="left:99px;top:455px;font-size:10px">F2</div>
<svg style="left:125px;top:449px" width="18" height="18" viewBox="0 0 18 18"><rect x="0" y="0" width="18" height="18" fill="#000"/><rect x="1" y="1" width="16" height="16" fill="#969696"/><rect x="2" y="2" width="14" height="14" fill="#0c0c0c"/><rect x="3" y="3" width="12" height="12" fill="#800000"/><path d="M4.3 7.8 L7.8 4.3" stroke="#fff" stroke-width="1.3" fill="none"/></svg>
<div class="t" style="left:147px;top:455px;font-size:10px">F3</div>
<svg style="left:18px;top:484px" width="38" height="38" viewBox="0 0 38 38">
<rect x="3.5" y="3.5" width="32.5" height="32" fill="#808080"/>
<rect x="1.4" y="1.4" width="31.2" height="31.2" rx="1.3" fill="#fff" stroke="#000" stroke-width="1.3"/>
<path d="M30.3 3 V30.6 H3.5" stroke="#d4d4d4" stroke-width="2" fill="none"/>
<rect x="5.6" y="4.4" width="22.2" height="7" fill="#800000" stroke="#000" stroke-width="0.9"/>
<path d="M14.6 6v4.2 M17 6h2.3v2.2h-2.3z M19.3 8v2.2 M21.4 6h2.6l-1.5 4.2 M25.8 6v4.2" stroke="#ff1010" stroke-width="1.5" fill="none"/>
<g fill="#ffee5a" stroke="#000" stroke-width="1.1"><circle cx="8.5" cy="16.4" r="2.2"/><circle cx="16.6" cy="16.4" r="2.2"/><circle cx="24.6" cy="16.4" r="2.2"/>
<circle cx="8.5" cy="24.4" r="2.2"/><circle cx="16.6" cy="24.4" r="2.2"/></g><circle cx="24.6" cy="24.4" r="2.2" fill="#f00" stroke="#000" stroke-width="1.1"/>
</svg>
<div class="t bold" style="left:72px;top:486px;font-size:20px;color:#9c9c9c;letter-spacing:0.3px">PMC 1.0</div>
<div class="t bold" style="left:68.5px;top:482px;font-size:20px;color:#fff;letter-spacing:0.3px">PMC 1.0</div>
<div class="t" style="left:59.5px;top:507px;font-size:10.83px">(C) 2002 J. WAŁASZEK</div>
<div class="frame2" style="left:180px;top:257px;width:293px;height:267px"></div>
<div class="hdr" style="left:184px;top:261px;width:286px;height:14px;line-height:14px"><span>Program - (PCR)</span></div>
<div class="lbl" style="left:186px;top:281px;transform:scaleX(1)">Adres</div>
<div class="lbl" style="left:224px;top:281px;transform:scaleX(0.87)">HEX</div>
<div class="lbl" style="left:264px;top:281px;transform:scaleX(0.93)">Etykieta</div>
<div class="lbl" style="left:334px;top:281px;transform:scaleX(0.94)">Inst.</div>
<div class="lbl" style="left:368px;top:281px;transform:scaleX(0.985)">Argument</div>
<div style="left:185px;top:299px;width:285px;height:221px;overflow:hidden">
<div style="left:31px;top:0;width:238px;height:221px;background:#fff"></div>
<div style="left:31px;top:120px;width:237px;height:14px;background:#3399ff"></div>
<div style="left:31px;top:134px;width:237px;height:1px;background:#99ccff"></div>
<div class="cell" style="left:0;top:0px;width:31px;height:15px"><i>O</i></div>
<div class="mono" style="left:33.5px;top:1px;color:#000"><i>O</i><i>O</i>2<i>O</i></div>
<div class="mono" style="left:74.5px;top:1px">CHP:</div>
<div class="cell" style="left:0;top:15px;width:31px;height:15px">1</div>
<div class="mono" style="left:33.5px;top:16px;color:#000"><i>O</i><i>O</i><i>O</i><i>O</i></div>
<div class="mono" style="left:74.5px;top:16px">CHI:</div>
<div class="cell" style="left:0;top:30px;width:31px;height:15px">2</div>
<div class="mono" style="left:33.5px;top:31px;color:#000">FFFF</div>
<div class="mono" style="left:74.5px;top:31px">INP:</div>
<div class="cell" style="left:0;top:45px;width:31px;height:15px">3</div>
<div class="mono" style="left:33.5px;top:46px;color:#000"><i>O</i><i>O</i><i>O</i><i>O</i></div>
<div class="mono" style="left:74.5px;top:46px">IOP:</div>
<div class="cell" style="left:0;top:60px;width:31px;height:15px">4</div>
<div class="mono" style="left:33.5px;top:61px;color:#000"><i>O</i><i>O</i><i>O</i><i>O</i></div>
<div class="mono" style="left:74.5px;top:61px">DSP:</div>
<div class="cell" style="left:0;top:75px;width:31px;height:15px">5</div>
<div class="mono" style="left:33.5px;top:76px;color:#000"><i>O</i><i>O</i><i>O</i><i>O</i></div>
<div class="mono" style="left:74.5px;top:76px">DSI:</div>
<div class="cell" style="left:0;top:90px;width:31px;height:15px">6</div>
<div class="mono" style="left:33.5px;top:91px;color:#000"><i>O</i><i>O</i><i>O</i><i>O</i></div>
<div class="mono" style="left:74.5px;top:91px">GRP:</div>
<div class="cell" style="left:0;top:105px;width:31px;height:15px">7</div>
<div class="mono" style="left:33.5px;top:106px;color:#000"><i>O</i><i>O</i><i>O</i><i>O</i></div>
<div class="mono" style="left:74.5px;top:106px">GRI:</div>
<div class="cell" style="left:0;top:120px;width:31px;height:15px">8</div>
<div class="mono" style="left:33.5px;top:121px;color:#fff"><i>O</i><i>O</i><i>O</i><i>O</i></div>
<div class="mono" style="left:149px;top:121px;color:#fff">DAT</div>
<div class="mono" style="left:174px;top:121px;color:#fff"><i>O</i></div>
<div class="cell" style="left:0;top:135px;width:31px;height:15px">9</div>
<div class="mono" style="left:33.5px;top:136px;color:#000"><i>O</i><i>O</i><i>O</i><i>O</i></div>
<div class="mono" style="left:149px;top:136px;color:#000">DAT</div>
<div class="mono" style="left:174px;top:136px;color:#000"><i>O</i></div>
<div class="cell" style="left:0;top:150px;width:31px;height:15px">1<i>O</i></div>
<div class="mono" style="left:33.5px;top:151px;color:#000"><i>O</i><i>O</i><i>O</i><i>O</i></div>
<div class="mono" style="left:149px;top:151px;color:#000">DAT</div>
<div class="mono" style="left:174px;top:151px;color:#000"><i>O</i></div>
<div class="cell" style="left:0;top:165px;width:31px;height:15px">11</div>
<div class="mono" style="left:33.5px;top:166px;color:#000"><i>O</i><i>O</i><i>O</i><i>O</i></div>
<div class="mono" style="left:149px;top:166px;color:#000">DAT</div>
<div class="mono" style="left:174px;top:166px;color:#000"><i>O</i></div>
<div class="cell" style="left:0;top:180px;width:31px;height:15px">12</div>
<div class="mono" style="left:33.5px;top:181px;color:#000"><i>O</i><i>O</i><i>O</i><i>O</i></div>
<div class="mono" style="left:149px;top:181px;color:#000">DAT</div>
<div class="mono" style="left:174px;top:181px;color:#000"><i>O</i></div>
<div class="cell" style="left:0;top:195px;width:31px;height:15px">13</div>
<div class="mono" style="left:33.5px;top:196px;color:#000"><i>O</i><i>O</i><i>O</i><i>O</i></div>
<div class="mono" style="left:149px;top:196px;color:#000">DAT</div>
<div class="mono" style="left:174px;top:196px;color:#000"><i>O</i></div>
<div class="cell" style="left:0;top:210px;width:31px;height:15px">14</div>
<div class="mono" style="left:33.5px;top:211px;color:#000"><i>O</i><i>O</i><i>O</i><i>O</i></div>
<div class="mono" style="left:149px;top:211px;color:#000">DAT</div>
<div class="mono" style="left:174px;top:211px;color:#000"><i>O</i></div>
<div style="left:269px;top:0;width:16px;height:221px;background:#f0f0f0"></div>
<div style="left:269px;top:17px;width:15px;height:17px;background:#cdcdcd"></div>
<svg style="left:269px;top:1px" width="16" height="220" viewBox="0 0 16 220"><path d="M4.4 9.9 L7.5 6.5 L10.6 9.9" stroke="#4c4c4c" stroke-width="2" fill="none"/><path d="M4.4 210.1 L7.5 213.5 L10.6 210.1" stroke="#4c4c4c" stroke-width="2" fill="none"/></svg>
</div>
<div class="frame2" style="left:474px;top:257px;width:164px;height:267px"></div>
<div class="hdr" style="left:478px;top:261px;width:157px;height:14px;line-height:14px"><span>Pamięć - (adr)</span></div>
<div class="lbl" style="left:480px;top:281px;transform:scaleX(1)">Adres</div>
<div class="lbl" style="left:518px;top:281px;transform:scaleX(0.93)">Etykieta</div>
<div class="lbl" style="left:574px;top:281px;transform:scaleX(1.06)">Zawartość</div>
<div style="left:479px;top:299px;width:156px;height:221px;overflow:hidden">
<div style="left:31px;top:0;width:108px;height:221px;background:#ffffe1"></div>
<div style="left:31px;top:0;width:108px;height:14px;background:#3399ff"></div>
<div style="left:31px;top:14px;width:108px;height:1px;background:#99ccf0"></div>
<div class="cell" style="left:0;top:0px;width:31px;height:15px"><i>O</i></div>
<div class="mono" style="left:33px;top:1px;color:#fff">CHP:</div>
<div class="mono" style="left:80px;top:1px;width:58px;text-align:right;color:#fff">32</div>
<div class="cell" style="left:0;top:15px;width:31px;height:15px">1</div>
<div class="mono" style="left:33px;top:16px;color:#000">CHI:</div>
<div class="mono" style="left:80px;top:16px;width:58px;text-align:right;color:#000"><i>O</i></div>
<div class="cell" style="left:0;top:30px;width:31px;height:15px">2</div>
<div class="mono" style="left:33px;top:31px;color:#000">INP:</div>
<div class="mono" style="left:80px;top:31px;width:58px;text-align:right;color:#000">-1</div>
<div class="cell" style="left:0;top:45px;width:31px;height:15px">3</div>
<div class="mono" style="left:33px;top:46px;color:#000">IOP:</div>
<div class="mono" style="left:80px;top:46px;width:58px;text-align:right;color:#000"><i>O</i></div>
<div class="cell" style="left:0;top:60px;width:31px;height:15px">4</div>
<div class="mono" style="left:33px;top:61px;color:#000">DSP:</div>
<div class="mono" style="left:80px;top:61px;width:58px;text-align:right;color:#000"><i>O</i></div>
<div class="cell" style="left:0;top:75px;width:31px;height:15px">5</div>
<div class="mono" style="left:33px;top:76px;color:#000">DSI:</div>
<div class="mono" style="left:80px;top:76px;width:58px;text-align:right;color:#000"><i>O</i></div>
<div class="cell" style="left:0;top:90px;width:31px;height:15px">6</div>
<div class="mono" style="left:33px;top:91px;color:#000">GRP:</div>
<div class="mono" style="left:80px;top:91px;width:58px;text-align:right;color:#000"><i>O</i></div>
<div class="cell" style="left:0;top:105px;width:31px;height:15px">7</div>
<div class="mono" style="left:33px;top:106px;color:#000">GRI:</div>
<div class="mono" style="left:80px;top:106px;width:58px;text-align:right;color:#000"><i>O</i></div>
<div class="cell" style="left:0;top:120px;width:31px;height:15px">8</div>
<div class="mono" style="left:80px;top:121px;width:58px;text-align:right;color:#000"><i>O</i></div>
<div class="cell" style="left:0;top:135px;width:31px;height:15px">9</div>
<div class="mono" style="left:80px;top:136px;width:58px;text-align:right;color:#000"><i>O</i></div>
<div class="cell" style="left:0;top:150px;width:31px;height:15px">1<i>O</i></div>
<div class="mono" style="left:80px;top:151px;width:58px;text-align:right;color:#000"><i>O</i></div>
<div class="cell" style="left:0;top:165px;width:31px;height:15px">11</div>
<div class="mono" style="left:80px;top:166px;width:58px;text-align:right;color:#000"><i>O</i></div>
<div class="cell" style="left:0;top:180px;width:31px;height:15px">12</div>
<div class="mono" style="left:80px;top:181px;width:58px;text-align:right;color:#000"><i>O</i></div>
<div class="cell" style="left:0;top:195px;width:31px;height:15px">13</div>
<div class="mono" style="left:80px;top:196px;width:58px;text-align:right;color:#000"><i>O</i></div>
<div class="cell" style="left:0;top:210px;width:31px;height:15px">14</div>
<div class="mono" style="left:80px;top:211px;width:58px;text-align:right;color:#000"><i>O</i></div>
<div style="left:139px;top:0;width:17px;height:221px;background:#f0f0f0"></div>
<div style="left:140px;top:17px;width:15px;height:17px;background:#cdcdcd"></div>
<svg style="left:139px;top:1px" width="17" height="220" viewBox="0 0 17 220"><path d="M5.4 9.9 L8.5 6.5 L11.6 9.9" stroke="#4c4c4c" stroke-width="2" fill="none"/><path d="M5.4 210.1 L8.5 213.5 L11.6 210.1" stroke="#4c4c4c" stroke-width="2" fill="none"/></svg>
</div>
<div class="frame2" style="left:639px;top:257px;width:103px;height:267px"></div>
<div class="hdr" style="left:643px;top:261px;width:95px;height:14px;line-height:14px"><span>Stos - (SPR)</span></div>
<div class="lbl" style="left:645px;top:281px;transform:scaleX(1)">Adres</div>
<div class="lbl" style="left:677px;top:281px;transform:scaleX(1.065)">Zawartość</div>
<div style="left:644px;top:299px;width:94px;height:221px;overflow:hidden">
<div style="left:31px;top:0;width:46px;height:221px;background:#ffffe1"></div>
<div style="left:31px;top:0;width:46px;height:14px;background:#3399ff"></div>
<div style="left:31px;top:14px;width:46px;height:1px;background:#99ccf0"></div>
<div class="cell" style="left:0;top:0px;width:31px;height:15px"><i>O</i></div>
<div class="mono" style="left:31px;top:1px;width:43px;text-align:right;color:#fff"><i>O</i></div>
<div class="cell" style="left:0;top:15px;width:31px;height:15px">1</div>
<div class="mono" style="left:31px;top:16px;width:43px;text-align:right;color:#000"><i>O</i></div>
<div class="cell" style="left:0;top:30px;width:31px;height:15px">2</div>
<div class="mono" style="left:31px;top:31px;width:43px;text-align:right;color:#000"><i>O</i></div>
<div class="cell" style="left:0;top:45px;width:31px;height:15px">3</div>
<div class="mono" style="left:31px;top:46px;width:43px;text-align:right;color:#000"><i>O</i></div>
<div class="cell" style="left:0;top:60px;width:31px;height:15px">4</div>
<div class="mono" style="left:31px;top:61px;width:43px;text-align:right;color:#000"><i>O</i></div>
<div class="cell" style="left:0;top:75px;width:31px;height:15px">5</div>
<div class="mono" style="left:31px;top:76px;width:43px;text-align:right;color:#000"><i>O</i></div>
<div class="cell" style="left:0;top:90px;width:31px;height:15px">6</div>
<div class="mono" style="left:31px;top:91px;width:43px;text-align:right;color:#000"><i>O</i></div>
<div class="cell" style="left:0;top:105px;width:31px;height:15px">7</div>
<div class="mono" style="left:31px;top:106px;width:43px;text-align:right;color:#000"><i>O</i></div>
<div class="cell" style="left:0;top:120px;width:31px;height:15px">8</div>
<div class="mono" style="left:31px;top:121px;width:43px;text-align:right;color:#000"><i>O</i></div>
<div class="cell" style="left:0;top:135px;width:31px;height:15px">9</div>
<div class="mono" style="left:31px;top:136px;width:43px;text-align:right;color:#000"><i>O</i></div>
<div class="cell" style="left:0;top:150px;width:31px;height:15px">1<i>O</i></div>
<div class="mono" style="left:31px;top:151px;width:43px;text-align:right;color:#000"><i>O</i></div>
<div class="cell" style="left:0;top:165px;width:31px;height:15px">11</div>
<div class="mono" style="left:31px;top:166px;width:43px;text-align:right;color:#000"><i>O</i></div>
<div class="cell" style="left:0;top:180px;width:31px;height:15px">12</div>
<div class="mono" style="left:31px;top:181px;width:43px;text-align:right;color:#000"><i>O</i></div>
<div class="cell" style="left:0;top:195px;width:31px;height:15px">13</div>
<div class="mono" style="left:31px;top:196px;width:43px;text-align:right;color:#000"><i>O</i></div>
<div class="cell" style="left:0;top:210px;width:31px;height:15px">14</div>
<div class="mono" style="left:31px;top:211px;width:43px;text-align:right;color:#000"><i>O</i></div>
<div style="left:77px;top:0;width:17px;height:221px;background:#f0f0f0"></div>
<div style="left:78px;top:17px;width:15px;height:17px;background:#cdcdcd"></div>
<svg style="left:77px;top:1px" width="17" height="220" viewBox="0 0 17 220"><path d="M5.4 9.9 L8.5 6.5 L11.6 9.9" stroke="#4c4c4c" stroke-width="2" fill="none"/><path d="M5.4 210.1 L8.5 213.5 L11.6 210.1" stroke="#4c4c4c" stroke-width="2" fill="none"/></svg>
</div>
</body></html>
